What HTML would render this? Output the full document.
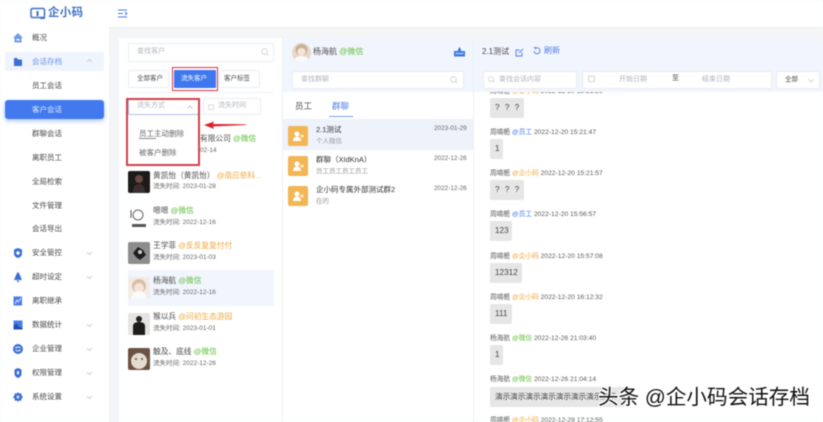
<!DOCTYPE html>
<html><head><meta charset="utf-8">
<style>
*{box-sizing:border-box;margin:0;padding:0}
html,body{width:823px;height:422px;overflow:hidden;background:#f4f5f7}
body{position:relative;font-family:"Liberation Sans","Noto Sans CJK SC",sans-serif;color:#555}
#w{position:absolute;left:0;top:0;width:823px;height:422px;overflow:hidden;filter:blur(.45px)}
.a{position:absolute}
.t{position:absolute;line-height:12px;height:12px;white-space:nowrap}
.nav{font-size:7.5px;color:#4a4a4a;left:32px}
.ic{position:absolute;left:13px;width:10px;height:10px}
.chev{position:absolute;left:87px;width:5px;height:3px}
.box{position:absolute;background:#fff;border:1px solid #eaecf0;border-radius:2px}
.ph{color:#b0b4bc;font-size:7px}
.n{font-size:7.7px;color:#4a4a4a;left:153px}
.s{font-size:6.5px;color:#666;left:153px}
.g{color:#5fbf3a}.o{color:#f0a83e}.b{color:#4a7bec}
.av{position:absolute;left:128px;width:22px;height:22px;border-radius:2px;overflow:hidden}
.gi{position:absolute;left:288px;width:20px;height:20px;background:#f2b655;border-radius:2px}
.m1{font-size:6.7px;color:#5a5a5a;left:490px}
.bb{position:absolute;left:490px;height:20px;background:#e6e6e6;border-radius:2px;font-size:8.2px;color:#444;line-height:20px;padding-left:5px;white-space:nowrap;overflow:hidden}
.gt{font-size:7.5px;color:#333;left:316px}
.gs{font-size:6.5px;color:#999;left:316px}
.gd{font-size:6.4px;color:#666;left:434px}
</style></head><body><div id="w">

<!-- sidebar -->
<div class="a" style="left:0;top:0;width:109px;height:422px;background:#fff"></div>
<div class="a" style="left:109px;top:0;width:714px;height:28px;background:#fff;border-bottom:1px solid #eee"></div>
<svg class="a" style="left:30px;top:7px" width="16" height="13" viewBox="0 0 16 13"><rect x="1" y="1.500" width="13.500" height="9" rx="1.500" fill="none" stroke="#3f72c4" stroke-width="1.500"/><rect x="6.500" y="4" width="2" height="5" fill="#3f72c4"/><path d="M10 10.500h5v1.500h-5z" fill="#3f72c4"/></svg>
<div class="t" style="left:48px;top:7px;font-size:11.500px;line-height:13px;height:13px;color:#3f72c4;font-weight:bold;letter-spacing:.3px">企小码</div>
<svg class="a" style="left:118px;top:9px" width="10" height="9" viewBox="0 0 10 9"><path d="M0 1h9M0 4.500h5M0 8h9M7 3l2 1.500L7 6" fill="none" stroke="#4a7bec" stroke-width="1"/></svg>

<svg class="ic" style="top:33px" viewBox="0 0 10 10"><path d="M5 0L10 5H8.500V9.500H1.500V5H0z" fill="#6f9be8"/><rect x="3.500" y="6" width="3" height="1.500" fill="#fff"/></svg>
<div class="t nav" style="top:32px">概况</div>
<div class="a" style="left:5px;top:52px;width:99px;height:19px;background:#f0f4fc;border-radius:2px"></div>
<svg class="ic" style="top:57px" viewBox="0 0 10 10"><path d="M1 1h3l1 1.500h4v6.500H1z" fill="#3a6fd8"/></svg>
<div class="t nav b" style="top:56px;color:#6a93e8">会话存档</div>
<svg class="chev" style="top:59px" viewBox="0 0 5 3"><path d="M0 3L2.500 .5 5 3" fill="none" stroke="#bbb" stroke-width=".7"/></svg>
<div class="t nav" style="top:80px">员工会话</div>
<div class="a" style="left:5px;top:100px;width:99px;height:19px;background:#4379ee;border-radius:3px;box-shadow:0 2px 5px rgba(67,121,238,.45)"></div>
<div class="t nav" style="top:104px;color:#dfe8fb">客户会话</div>
<div class="t nav" style="top:128px">群聊会话</div>
<div class="t nav" style="top:152px">离职员工</div>
<div class="t nav" style="top:176px">全局检索</div>
<div class="t nav" style="top:200px">文件管理</div>
<div class="t nav" style="top:223px">会话导出</div>

<svg class="ic" style="top:248px" viewBox="0 0 10 10"><path d="M5 0l4 1.500v4C9 8 7 9.500 5 10 3 9.500 1 8 1 5.500v-4z" fill="#3a6fd8"/><circle cx="5" cy="5" r="1.700" fill="#fff"/></svg>
<div class="t nav" style="top:247px">安全管控</div>
<svg class="chev" style="top:252px" viewBox="0 0 5 3"><path d="M0 0L2.500 2.500 5 0" fill="none" stroke="#bbb" stroke-width=".7"/></svg>
<svg class="ic" style="top:272px" viewBox="0 0 10 10"><path d="M5 0C7 2 7.500 5 9 8H1C2.500 5 3 2 5 0z" fill="#3a6fd8"/><rect x="4" y="8.500" width="2" height="1.500" fill="#3a6fd8"/></svg>
<div class="t nav" style="top:271px">超时设定</div>
<svg class="chev" style="top:276px" viewBox="0 0 5 3"><path d="M0 0L2.500 2.500 5 0" fill="none" stroke="#bbb" stroke-width=".7"/></svg>
<svg class="ic" style="top:296px" viewBox="0 0 10 10"><rect x=".5" y=".5" width="8.500" height="9" fill="#4a7bec"/><path d="M2 8l2-4 1.500 2L8 2" fill="none" stroke="#cfe0ff" stroke-width="1"/></svg>
<div class="t nav" style="top:295px">离职继承</div>
<svg class="ic" style="top:320px" viewBox="0 0 10 10"><rect x=".5" y=".5" width="9" height="9" fill="#4a7bec"/><path d="M.5 6l3-2.500 2 3L9.500 8v1.500h-9z" fill="#1f4fb0"/></svg>
<div class="t nav" style="top:319px">数据统计</div>
<svg class="chev" style="top:324px" viewBox="0 0 5 3"><path d="M0 0L2.500 2.500 5 0" fill="none" stroke="#bbb" stroke-width=".7"/></svg>
<svg class="ic" style="top:344px" viewBox="0 0 10 10"><circle cx="5" cy="5" r="5" fill="#3a6fd8"/><path d="M2.500 4.500C3 3 6 2.500 7.500 4M7.500 5.500C7 7 4 7.500 2.500 6" fill="none" stroke="#fff" stroke-width=".9"/></svg>
<div class="t nav" style="top:343px">企业管理</div>
<svg class="chev" style="top:348px" viewBox="0 0 5 3"><path d="M0 0L2.500 2.500 5 0" fill="none" stroke="#bbb" stroke-width=".7"/></svg>
<svg class="ic" style="top:368px" viewBox="0 0 10 10"><path d="M5 0l3.500 1.500v4.500C8.500 8 6.500 9.500 5 10 3.500 9.500 1.500 8 1.500 6V1.500z" fill="#3a6fd8"/><rect x="4" y="3" width="2" height="3.500" rx="1" fill="#fff"/></svg>
<div class="t nav" style="top:367px">权限管理</div>
<svg class="chev" style="top:372px" viewBox="0 0 5 3"><path d="M0 0L2.500 2.500 5 0" fill="none" stroke="#bbb" stroke-width=".7"/></svg>
<svg class="ic" style="top:392px" viewBox="0 0 10 10"><path d="M5 0l1 1.500 2.200-.3.300 2.200L10 5 8.500 6.600l-.3 2.200L6 8.500 5 10 4 8.500l-2.200.3-.3-2.200L0 5l1.500-1.600.3-2.200L4 1.500z" fill="#3a6fd8"/><circle cx="5" cy="5" r="1.500" fill="#cfe0ff"/></svg>
<div class="t nav" style="top:391px">系统设置</div>
<svg class="chev" style="top:396px" viewBox="0 0 5 3"><path d="M0 0L2.500 2.500 5 0" fill="none" stroke="#bbb" stroke-width=".7"/></svg>

<!-- panels -->
<div class="a" style="left:119px;top:38px;width:163px;height:384px;background:#fff"></div>
<div class="a" style="left:283px;top:38px;width:540px;height:384px;background:#fff"></div>
<div class="a" style="left:283px;top:38px;width:540px;height:54px;background:#f1f5fd"></div>
<div class="a" style="left:473px;top:38px;width:1px;height:384px;background:#eef0f3"></div>
<div class="a" style="left:282px;top:38px;width:1px;height:384px;background:#eef0f3"></div>

<!-- left panel -->
<div class="box" style="left:128px;top:43px;width:146px;height:19px"></div>
<div class="t ph" style="left:137px;top:46px">查找客户</div>
<svg class="a" style="left:261px;top:48px" width="8" height="8" viewBox="0 0 8 8"><circle cx="3.500" cy="3.500" r="2.800" fill="none" stroke="#ccc" stroke-width=".8"/><path d="M5.500 5.500L7.500 7.500" stroke="#ccc" stroke-width=".8"/></svg>
<div class="box" style="left:128px;top:70px;width:41px;height:18px"></div>
<div class="t" style="left:137px;top:73px;font-size:6.500px;color:#4a4a4a">全部客户</div>
<div class="a" style="left:172px;top:67px;width:46px;height:24px;border:1.500px solid #d8343f"></div>
<div class="a" style="left:174px;top:70px;width:42px;height:18px;background:#3f78ee;border-radius:1px"></div>
<div class="t" style="left:181px;top:73px;font-size:6.500px;color:#fff">流失客户</div>
<div class="box" style="left:219px;top:70px;width:41px;height:18px"></div>
<div class="t" style="left:224px;top:73px;font-size:6.500px;color:#4a4a4a">客户标签</div>
<div class="a" style="left:128px;top:92px;width:146px;height:1px;background:#f0f1f4"></div>

<div class="box" style="left:128px;top:98px;width:71px;height:17px;border-color:#aebfe8"></div>
<div class="t ph" style="left:137px;top:100px">流失方式</div>
<svg class="a" style="left:187px;top:105px" width="6" height="4" viewBox="0 0 6 4"><path d="M.5 3.500L3 1l2.500 2.500" fill="none" stroke="#bbb" stroke-width=".8"/></svg>
<div class="box" style="left:203px;top:98px;width:58px;height:17px"></div>
<svg class="a" style="left:208px;top:104px" width="6" height="6" viewBox="0 0 6 6"><rect x=".5" y="1" width="5" height="4.500" fill="none" stroke="#ccc" stroke-width=".7"/></svg>
<div class="t ph" style="left:218px;top:100px">流失时间</div>

<div class="a" style="left:128px;top:118px;width:71px;height:47px;background:#fff"></div>
<div class="a" style="left:126px;top:98px;width:74px;height:68px;border:2px solid #d0404c"></div>
<div class="t" style="left:139px;top:128px;font-size:7.500px;color:#666">员工主动删除</div>
<div class="a" style="left:139px;top:138px;width:17px;height:1px;background:#888"></div>
<div class="t" style="left:139px;top:147px;font-size:7.500px;color:#666">被客户删除</div>
<svg class="a" style="left:202px;top:120px" width="46" height="10" viewBox="0 0 46 10"><path d="M2 5L12 1.500 11 4 44 4.200V5L11 6.500 12 9z" fill="#d9232e"/></svg>

<!-- list -->
<div class="a" style="left:128px;top:270px;width:146px;height:36px;background:#f1f5fd"></div>
<div class="t n" style="left:200px;top:133px">有限公司 <span class="g">@微信</span></div>
<div class="t s" style="left:200px;top:145px">02-14</div>

<div class="av" style="top:171px;background:#1d1a1a"><svg width="22" height="22"><circle cx="11" cy="8" r="4" fill="#6a4a3c"/><path d="M5 22c0-7 3-9 6-9s6 2 6 9z" fill="#3a3030"/></svg></div>
<div class="t n" style="top:170px">黄凯怡（黄凯怡） <span class="o">@南应依科...</span></div>
<div class="t s" style="top:181px">流失时间: 2023-01-28</div>

<div class="av" style="top:207px;background:#fff"><svg width="22" height="22"><circle cx="10" cy="8" r="5" fill="none" stroke="#666" stroke-width="1"/><rect x="4" y="17" width="14" height="3" fill="#555"/><path d="M3 3v8" stroke="#555"/></svg></div>
<div class="t n" style="top:205px">嗯嗯 <span class="g">@微信</span></div>
<div class="t s" style="top:217px">流失时间: 2022-12-16</div>

<div class="av" style="top:242px;background:#8d8d8d"><svg width="22" height="22"><path d="M5 11l5-6 5 3 3 5-6 5-4-3z" fill="#1e1e1e"/><circle cx="12" cy="10" r="2" fill="#ccc"/></svg></div>
<div class="t n" style="top:240px">王学菲 <span class="o">@反反复复付付</span></div>
<div class="t s" style="top:252px">流失时间: 2023-01-03</div>

<div class="av" style="top:277px;background:#f3ece6"><svg width="22" height="22"><circle cx="11" cy="9" r="7" fill="#d8bfa5"/><circle cx="11" cy="11" r="5" fill="#f4e3d6"/><path d="M3 22c1-6 4-8 8-8s7 2 8 8z" fill="#fafafa"/></svg></div>
<div class="t n" style="top:275px">杨海航 <span class="g">@微信</span></div>
<div class="t s" style="top:287px">流失时间: 2022-12-16</div>

<div class="av" style="top:313px;background:#e6e4e2"><svg width="22" height="22"><circle cx="11" cy="6" r="3" fill="#222"/><path d="M5 22V13c0-3 3-4 6-4s6 1 6 4v9z" fill="#1c1c1c"/></svg></div>
<div class="t n" style="top:311px">猴以兵 <span class="o">@问初生态游园</span></div>
<div class="t s" style="top:323px">流失时间: 2023-01-01</div>

<div class="av" style="top:348px;background:#6b5244"><svg width="22" height="22"><ellipse cx="11" cy="13" rx="8" ry="8" fill="#e4dccf"/><circle cx="8" cy="11" r="1" fill="#554"/><circle cx="14" cy="11" r="1" fill="#554"/></svg></div>
<div class="t n" style="top:346px">触及、底线 <span class="g">@微信</span></div>
<div class="t s" style="top:358px">流失时间: 2022-12-26</div>

<!-- middle -->
<div class="a" style="left:292px;top:43px;width:19px;height:19px;border-radius:50%;background:#e8d8ca;overflow:hidden"><svg width="19" height="19"><circle cx="9.500" cy="7" r="6" fill="#cbb098"/><circle cx="9.500" cy="9" r="4" fill="#f4e3d6"/><path d="M2 19c1-5 4-6 7.500-6s6.500 1 7.500 6z" fill="#fafafa"/></svg></div>
<div class="t" style="left:313px;top:46px;font-size:8px;color:#4a4a4a">杨海航 <span class="g">@微信</span></div>
<svg class="a" style="left:454px;top:47px" width="11" height="10" viewBox="0 0 11 10"><path d="M0 4h4V2.500L5.500 0 7 2.500V4h4v5.500H0z" fill="#3f78e0"/><rect x="1.500" y="6" width="8" height="1" fill="#cfe0ff"/></svg>
<div class="box" style="left:292px;top:71px;width:172px;height:18px"></div>
<div class="t ph" style="left:301px;top:74px">查找群聊</div>
<svg class="a" style="left:450px;top:76px" width="8" height="8" viewBox="0 0 8 8"><circle cx="3.500" cy="3.500" r="2.800" fill="none" stroke="#ccc" stroke-width=".8"/><path d="M5.500 5.500L7.500 7.500" stroke="#ccc" stroke-width=".8"/></svg>
<div class="t" style="left:295px;top:100px;font-size:8.500px;color:#4a4a4a">员工</div>
<div class="t" style="left:332px;top:100px;font-size:8.500px;color:#4a7bec">群聊</div>
<div class="a" style="left:329px;top:115.500px;width:24px;height:1px;background:#7d9fe8"></div>
<div class="a" style="left:283px;top:119px;width:190px;height:31px;background:#edf2fb"></div>

<div class="gi" style="top:126px"><svg width="20" height="20"><circle cx="9" cy="8" r="2.500" fill="#fff"/><path d="M5 15c0-3 2-4.500 4-4.500s4 1.500 4 4.500z" fill="#fff"/><circle cx="14" cy="10" r="1.600" fill="#fbe6c2"/></svg></div>
<div class="t gt" style="top:124px">2.1测试</div>
<div class="t gs" style="top:136px">个人微信</div>
<div class="t gd" style="top:123px">2023-01-29</div>

<div class="gi" style="top:156px"><svg width="20" height="20"><circle cx="9" cy="8" r="2.500" fill="#fff"/><path d="M5 15c0-3 2-4.500 4-4.500s4 1.500 4 4.500z" fill="#fff"/><circle cx="14" cy="10" r="1.600" fill="#fbe6c2"/></svg></div>
<div class="t gt" style="top:154px">群聊（XIdKnA）</div>
<div class="t gs" style="top:166px">员工员工员工员工</div>
<div class="t gd" style="top:153px">2022-12-26</div>

<div class="gi" style="top:186px"><svg width="20" height="20"><circle cx="9" cy="8" r="2.500" fill="#fff"/><path d="M5 15c0-3 2-4.500 4-4.500s4 1.500 4 4.500z" fill="#fff"/><circle cx="14" cy="10" r="1.600" fill="#fbe6c2"/></svg></div>
<div class="t gt" style="top:184px">企小码专属外部测试群2</div>
<div class="t gs" style="top:196px">在的</div>
<div class="t gd" style="top:183px">2022-12-26</div>

<!-- right -->
<div class="t" style="left:482px;top:46px;font-size:8px;color:#4a4a4a">2.1测试</div>
<svg class="a" style="left:515px;top:48px" width="9" height="9" viewBox="0 0 9 9"><path d="M7 4.500V8H1V2h3.500M4 5l4-4" fill="none" stroke="#4a7bec" stroke-width=".9"/></svg>
<svg class="a" style="left:533px;top:47px" width="8" height="8" viewBox="0 0 8 8"><path d="M2 1.500A3 3 0 1 1 1 4" fill="none" stroke="#4a7bec" stroke-width=".9"/><path d="M.5 .5L2.500 .5 2.500 2.500" fill="none" stroke="#4a7bec" stroke-width=".7"/></svg>
<div class="t" style="left:544px;top:45px;font-size:8px;color:#4a7bec">刷新</div>

<div class="box" style="left:483px;top:71px;width:94px;height:18px"></div>
<svg class="a" style="left:488px;top:76px" width="7" height="7" viewBox="0 0 8 8"><circle cx="3.500" cy="3.500" r="2.800" fill="none" stroke="#ccc" stroke-width=".8"/><path d="M5.500 5.500L7.500 7.500" stroke="#ccc" stroke-width=".8"/></svg>
<div class="t ph" style="left:499px;top:74px">查找会话内容</div>
<div class="box" style="left:582px;top:71px;width:190px;height:18px"></div>
<svg class="a" style="left:588px;top:75px" width="7" height="7" viewBox="0 0 6 6"><rect x=".5" y="1" width="5" height="4.500" fill="none" stroke="#ccc" stroke-width=".7"/></svg>
<div class="t ph" style="left:619px;top:74px">开始日期</div>
<div class="t" style="left:672px;top:73px;font-size:7px;color:#444">至</div>
<div class="t ph" style="left:702px;top:74px">结束日期</div>
<div class="box" style="left:776px;top:71px;width:44px;height:18px"></div>
<div class="t" style="left:785px;top:74px;font-size:6.500px;color:#4a4a4a">全部</div>
<svg class="a" style="left:808px;top:79px" width="6" height="4" viewBox="0 0 6 4"><path d="M.5 .5L3 3l2.500-2.500" fill="none" stroke="#ccc" stroke-width=".8"/></svg>

<!-- messages -->
<div class="a" style="left:474px;top:92px;width:349px;height:330px;overflow:hidden">
  <div style="position:absolute;left:-474px;top:-92px;width:823px;height:422px">
    <div class="t m1" style="top:86px">周喃栀 <span class="o">@企小码</span> 2022-12-20 15:21:26</div>
    <div class="bb" style="top:98px;width:34px;letter-spacing:1.500px">? ? ?</div>
    <div class="t m1" style="top:127px">周喃栀 <span class="b">@员工</span> 2022-12-20 15:21:47</div>
    <div class="bb" style="top:139px;width:13px">1</div>
    <div class="t m1" style="top:168px">周喃栀 <span class="o">@企小码</span> 2022-12-20 15:21:57</div>
    <div class="bb" style="top:180px;width:34px;letter-spacing:1.500px">? ? ?</div>
    <div class="t m1" style="top:209px">周喃栀 <span class="b">@员工</span> 2022-12-20 15:56:57</div>
    <div class="bb" style="top:221px;width:22px">123</div>
    <div class="t m1" style="top:251px">周喃栀 <span class="o">@企小码</span> 2022-12-20 15:57:08</div>
    <div class="bb" style="top:263px;width:32px">12312</div>
    <div class="t m1" style="top:292px">周喃栀 <span class="o">@企小码</span> 2022-12-20 16:12:32</div>
    <div class="bb" style="top:304px;width:22px">111</div>
    <div class="t m1" style="top:333px">杨海航 <span class="g">@微信</span> 2022-12-26 21:03:40</div>
    <div class="bb" style="top:345px;width:13px">1</div>
    <div class="t m1" style="top:374px">杨海航 <span class="g">@微信</span> 2022-12-26 21:04:14</div>
    <div class="bb" style="top:387px;width:135px;font-size:7.600px">演示演示演示演示演示演示演示演示</div>
    <div class="t m1" style="top:415px">周喃栀 <span class="o">@企小码</span> 2022-12-29 17:12:55</div>
  </div>
</div>

<!-- watermark -->
<div class="t" style="left:598px;top:386px;height:24px;line-height:24px;font-size:20.600px;color:#111;text-shadow:-1px -1px 0 #fff,1px -1px 0 #fff,-1px 1px 0 #fff,1px 1px 0 #fff,0 0 2px #fff">头条 @企小码会话存档</div>

</div></body></html>
